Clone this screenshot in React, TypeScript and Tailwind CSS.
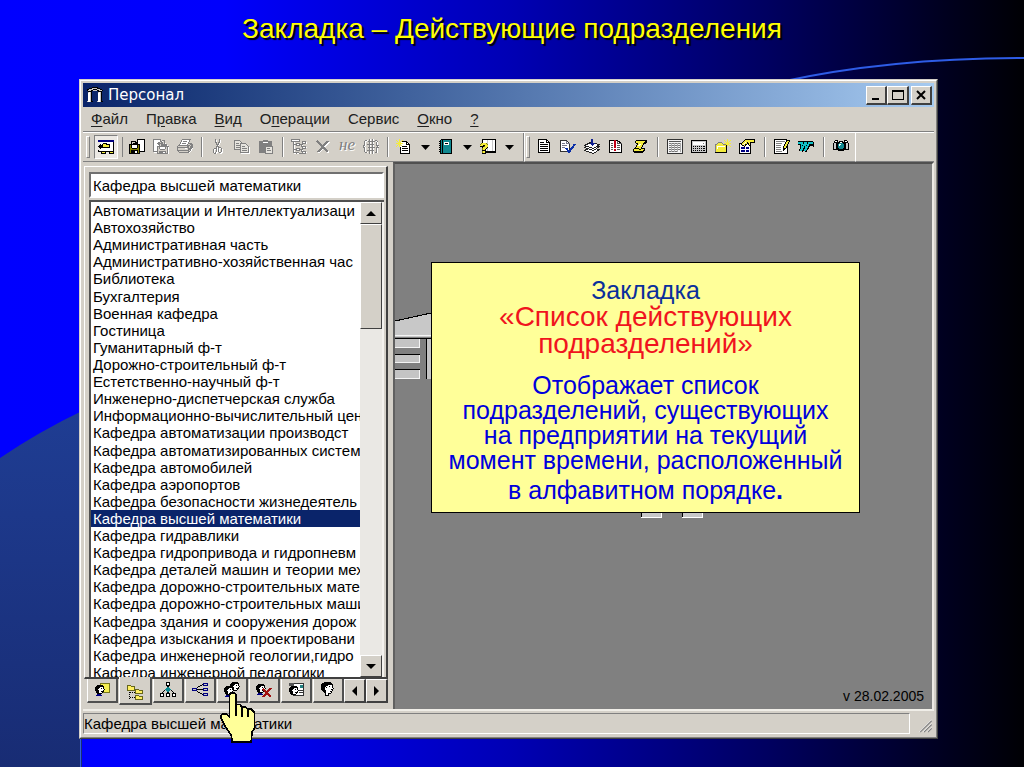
import React from "react";

type IconProps = { children: React.ReactNode; box?: string; className?: string };

function Icon({ children, box = "0 0 16 16", className = "size-4" }: IconProps) {
  return (
    <svg viewBox={box} className={`${className} block shrink-0`} shapeRendering="crispEdges" fill="none" aria-hidden="true">
      {children}
    </svg>
  );
}

const palette: Record<string, string> = {
  K: "#000000",
  W: "#ffffff",
  N: "#000080",
  Y: "#f4ec3c",
  O: "#808000",
  G: "#808080",
  L: "#c8c8c8",
  T: "#108890",
};

function Pixels({ rows, x = 0, y = 0 }: { rows: string[]; x?: number; y?: number }) {
  const cells: React.ReactNode[] = [];
  rows.forEach((row, r) => {
    let c = 0;
    while (c < row.length) {
      let end = c + 1;
      while (end < row.length && row[end] === row[c]) end += 1;
      if (palette[row[c]]) {
        cells.push(<rect key={`${r}-${c}`} x={x + c} y={y + r} width={end - c} height={1} fill={palette[row[c]]} />);
      }
      c = end;
    }
  });
  return <>{cells}</>;
}

const raised = "border border-t-white border-l-white border-r-[#404040] border-b-[#404040] bg-[#d4d0c8]";
const sunken = "border border-t-[#808080] border-l-[#808080] border-r-white border-b-white";

const smallHead = [
  "..KKKKKK..",
  ".KKKKKKKK.",
  "KKKKKWWWK.",
  "KKKKWWKWK.",
  "KKKWWWWWWK",
  "KKKKWWWWK.",
  ".KKKWWKKK.",
  ".KKKWWWK..",
  "..KKKKK...",
  "..NNNN....",
  ".NNNNNN...",
];

const icons: Record<string, React.ReactNode> = {
  app: (
    <Pixels
      rows={[
        ".....KKKKKK.....",
        "..KKKLLLLLKKK...",
        "KKLLLLKKKKLLLKK.",
        "KLLLKKLLLLKKLLLK",
        ".KKKK......KKKK.",
        ".LWLK......LWLK.",
        ".WWLK......WWLK.",
        ".WWLK......WWLK.",
        ".WWLK......WWLK.",
        ".WWLK......WWLK.",
        ".WWLK......WWLK.",
        ".WWLK......WWLK.",
        ".WWLK......WWLK.",
        ".WWLK......WWLK.",
        "LWWLKK....LWWLKK",
      ]}
    />
  ),
  view: (
    <Pixels
      rows={[
        "................",
        "NNNNNNNNNNNNNNNN",
        "NNNNNNNNNNNNNNNN",
        "..WWWWWWWWWWWWWK",
        "..WWWKKKKWWWWWWK",
        "..KWKYYYKKKKWWWK",
        ".KKKKYYYYYYKWWWK",
        "KKKKKYYYYYYKWWWK",
        ".KKKKKKKKKKKWWWK",
        "..KWWWWWWWWWWWWK",
        "..WWWWWWWWWWWWWK",
        "K.WWWWWWWWWWWWWK",
        "KKKKKKKKKKKKKKKK",
        "...KYYYK...KYYYK",
        "...KKKKK...KKKKK",
      ]}
    />
  ),
  save: (
    <Pixels
      rows={[
        "........KKKKKKKK",
        "........KWWWWWWK",
        "..KKKKK.KWWWWWWK",
        "..K...KKKWWWWWWK",
        "..K.KKKKKWWWWWWK",
        "KKKKKKKKKKKWWWWK",
        "KOKWWWWWKOKWWWWK",
        "KOKWWWWWKOKWWWWK",
        "KOKWWWWWKOKWWWWK",
        "KOOKKKKKOOKWWWWK",
        "KOOOOOOOOOKWWWWK",
        "KOKKKKKKKOKWWWWK",
        "KOKKKKWWKOKKKKKK",
        "KOKKKKWWKOK.....",
        "KKKKKKKKKKK.....",
      ]}
    />
  ),
  load: (
    <Pixels
      rows={[
        "GGGGGGGG........",
        "GWWWWWWG.GGG....",
        "GWWWWWWGGW.G....",
        "GWWWWGG.GG.G....",
        "GWWWGGGGGG.GW...",
        "GWWWWGG.GGGGGG..",
        "GWWWWWG.GGGGGGW.",
        "GWWWGGGGGGGGGGGG",
        "GWWWG.GWWWWWG.GW",
        "GWWWG.GWWWWWG.GW",
        "GWWWG..GGGGG..GW",
        "GWWWG.........GW",
        "GGGGG.GGGGGGG.GW",
        ".WWWG.GGGGWWG.GW",
        "....GGGGGGGGGGGW",
      ]}
    />
  ),
  print: (
    <Pixels
      rows={[
        ".....GGGGGGGGG..",
        "....GWWWWWWWG...",
        "....GWGGGGWWG...",
        "...GWWWWWWWG....",
        "...GWGGGGWWGGGG.",
        "..GWWWWWWWG..GGG",
        ".GGGGGGGGGGGG.GG",
        "G.........GG.GGG",
        "GGGGGGGGGGGG.GGG",
        "G.......WW.GGGGW",
        "G..........GGGW.",
        "GGGGGGGGGGGG.GW.",
        ".G.........GGW..",
        "..GGGGGGGGGGW...",
      ]}
    />
  ),
  cut: (
    <Pixels
      rows={[
        ".....G...G......",
        ".....GW..GW.....",
        ".....GW..GW.....",
        ".....GG.GGW.....",
        "......G.GW......",
        "......GGGW......",
        ".......GW.......",
        "......GGG.......",
        "......GWGGG.....",
        "....GGGWGWWG....",
        "...GWWGWGW.GW...",
        "...GW.GWGW.GW...",
        "...GW.GWGW.GW...",
        "...GWGWW.GGWW...",
        "....GGW...WW....",
      ]}
    />
  ),
  copy: (
    <>
      <path d="M.5 1.500h5l3 3v6h-8z" fill="#e6e4de" stroke="#808080" />
      <path d="M2 4.500h3M2 6.500h4M2 8.500h4" stroke="#808080" />
      <path d="M6.500 4.500h5l3 3v6h-8z" fill="#e6e4de" stroke="#808080" />
      <path d="M8 7.500h3M8 9.500h5M8 11.500h5" stroke="#808080" />
      <path d="M7 14.500h9M15.500 8v7" stroke="#fff" />
    </>
  ),
  paste: (
    <>
      <path d="M1 2h4V1h5v1h4v12H1z" fill="#808080" />
      <path d="M5 3h5v1H5z" fill="#fff" />
      <path d="M7.500 7.500h7v7h-7z" fill="#e6e4de" stroke="#808080" />
      <path d="M9 9.500h3M9 11.500h4" stroke="#808080" />
    </>
  ),
  tree: (
    <Pixels
      rows={[
        "GGGGGGGGG.......",
        "GWWWWWWWG.......",
        "GGGGGGGGG..GGGG.",
        "..GW.......GWWGW",
        "..GW.GGGG..GGGGW",
        "..GGGGWWGGGG....",
        "..GW.GGGG.GW....",
        "..GW......GGGGG.",
        "..GW.......GWWGW",
        "..GW.GGGG..GGGG.",
        "..GGGGWWGGGG....",
        "..GW.GGGG.GW....",
        "..GW......GGGGG.",
        "..GGGGGG...GWWGW",
        "...WWGWWGGGGGGG.",
      ]}
    />
  ),
  remove: (
    <>
      <path d="M3 3l11 11M14 3L4 14" stroke="#fff" strokeWidth="1.500" />
      <path d="M2 2l11 11M13 2L3 13" stroke="#808080" strokeWidth="2" />
    </>
  ),
  braces: (
    <Pixels
      rows={[
        "......GW.GW.....",
        "..GGW.GW.GW.GG..",
        ".GWW.GGGGGGG.WG.",
        ".GW...GW.GW..GW.",
        ".GW...GW.GW..GW.",
        ".GW.GGGGGGG..GW.",
        "GGW...GW.GW..GGG",
        "GW....GW.GW...GW",
        "GGW..GGGGGGG.GGG",
        ".GW...GW.GW..GW.",
        ".GW...GW.GW..GW.",
        ".GW.GGGGGGG..GW.",
        ".GW...GW.GW..GW.",
        "..GGW.GW.GW.GGW.",
        "......GW.GW.....",
      ]}
    />
  ),
  newDoc: (
    <Pixels
      rows={[
        "...Y............",
        "Y..Y..Y.........",
        ".Y.Y.YKKKKK.....",
        "..YYYWWWWWKK....",
        "YYYYYYYWWWKWK...",
        "..YYYWWWWWKKKK..",
        ".Y.Y.YWWWWWWWK..",
        "Y..YWWKKKKKWWK..",
        "....KWWWWWWWWK..",
        "....KWKKKKKKWK..",
        "....KWWWWWWWWK..",
        "....KWKKKKKKWK..",
        "....KWWWWWWWWK..",
        "....KWWWWWWWWK..",
        "....KKKKKKKKKK..",
      ]}
    />
  ),
  book: (
    <Pixels
      rows={[
        "...KKKKKKKKKKK..",
        "..KTKTTTTTTTTK..",
        ".KKTKTTTTTTTTK..",
        "..KTKTWWWWWTTK..",
        ".KKTKTWKKKWTTK..",
        "..KTKTWWWWWTTK..",
        ".KKTKTTTTTTTTK..",
        "..KTKTTTTTTTTK..",
        ".KKTKTTTTTTTTK..",
        "..KTKTTTTTTTTK..",
        ".KKTKTTTTTTTTK..",
        "..KTKTTTTTTTTK..",
        ".KKTKTTTTTTTTK..",
        "..KTKTTTTTTTTK..",
        "..KKKKKKKKKKKK..",
      ]}
    />
  ),
  help: (
    <Pixels
      rows={[
        "..KKKKKKKKKKKKKK",
        "..KWWWWLWWWWLWWK",
        "..KWWWWLWWWWLWWK",
        "..KWWWWLWWWWLWWK",
        ".OYYYYOLWWWWLWWK",
        "OYYYYYYOWWWWLWWK",
        "YYYKKYYYWWWWLWWK",
        "KKKKOYYYWWWWLWWK",
        "..KYYYYKWWWWLWWK",
        "..OYYYKLWWWWLWWK",
        "..OYYKWLWWWWLWWK",
        "..KKKKWLWWWWLWWK",
        "..OYYKKKKKKKKKKK",
        "..OYYKKKKKKKKKKK",
        "..KKKK..........",
      ]}
    />
  ),
  page: (
    <Pixels
      rows={[
        "..KKKKKKKKK.....",
        "..KWWWWWWWKK....",
        "..KWWWWWWWKWK...",
        "..KWKKKKWWKKKK..",
        "..KWWWWWWWWWWK..",
        "..KWKKKKKKKKWK..",
        "..KWWWWWWWWWWK..",
        "..KWKKKKKKKKWK..",
        "..KWWWWWWWWWWK..",
        "..KWKKKKKKKKWK..",
        "..KWWWWWWWWWWK..",
        "..KWKKKKKKKKWK..",
        "..KWWWWWWWWWWK..",
        "..KKKKKKKKKKKK..",
      ]}
    />
  ),
  check: (
    <>
      <path d="M.5 1.500h6l3 3v8h-9z" fill="#fff" stroke="#333" />
      <path d="M6.500 1.500v3h3M2 4.500h3M2 6.500h5M2 8.500h3" stroke="#778" />
      <path d="M6 9l3 4 6-8" stroke="#0a2fa8" strokeWidth="2" />
    </>
  ),
  stack: (
    <>
      <path d="M.5 11.500l6-3 9 2-6 4z" fill="#fff" stroke="#222" />
      <path d="M.5 8.500l6-3 9 2-6 4z" fill="#fff" stroke="#222" />
      <path d="M.5 6.500l6-3 9 2-6 4z" fill="#fff" stroke="#222" />
      <path d="M7 0h2v4h2L8 7 5 4h2z" fill="#102090" />
    </>
  ),
  alert: (
    <>
      <path d="M1.500 1.500h8l4 3v9h-12z" fill="#fff" stroke="#000" />
      <path d="M9.500 1.500v3h4M3 4.500h2M3 6.500h2M3 8.500h2M3 10.500h2M9 6.500h3M9 8.500h3M9 10.500h3" stroke="#555" />
      <path d="M6 1h2v8H6zM6 10h2v2H6z" fill="#c00018" />
    </>
  ),
  scroll: (
    <Pixels
      rows={[
        "................",
        "....KKKKKKKKKKK.",
        "...KYYYYYYYYYKK.",
        "...KYYYYYYYYKKK.",
        "....KKYYYYYKKK..",
        ".....KYWWYYK....",
        "....KYWWYYK.....",
        "....KYYYYYK.....",
        "...KYYYYYK......",
        "..KKKKKYYKKKK...",
        ".KYYYYYKKYYYK...",
        ".KYYYYYYYYYKK...",
        ".KKKKKKKKKKK....",
        "..KKKKKKKKK.....",
      ]}
    />
  ),
  table: (
    <>
      <path d="M.5.500h15v14H.500z" fill="#f4f4f4" stroke="#333" />
      <path d="M2 2.500h12" stroke="#555" />
      <path d="M2 4.500h12M2 6.500h12M2 8.500h12M2 10.500h12M2 12.500h8" stroke="#777" />
      <path d="M4.500 4v9M7.500 4v9M10.500 4v9M13.500 4v9" stroke="#aaa" />
    </>
  ),
  calc: (
    <Pixels
      rows={[
        "................",
        "KKKKKKKKKKKKKKKK",
        "KLLLLLLLLLLLLLLK",
        "KLWWWWWWWWWWWWLK",
        "KLWWWWWWWWWWGWLK",
        "KLWWWWWWWWWWWWLK",
        "KLLLLLLLLLLLLLLK",
        "KLKLKLKLKLKLKKLK",
        "KLLLLLLLLLLLLLLK",
        "KLKLKLKLKLKLKKLK",
        "KLLLLLLLLLLLLLLK",
        "KLKLKLKLKLKLKKLK",
        "KLLLLLLLLLLLLLLK",
        "KKKKKKKKKKKKKKKK",
      ]}
    />
  ),
  folderNew: (
    <Pixels
      rows={[
        "............Y...",
        ".........Y..Y..Y",
        "..........Y.Y.Y.",
        "...GGGG....YYY..",
        "..GYYYYG.YYYYYYY",
        "GGYYYYYYGGGYYY..",
        "GYYYYYYYYYYKY.Y.",
        "GYWWWWWWWWYK...Y",
        "GYWYYYYYYYYK....",
        "GYWYYYYYYYYK....",
        "GYYYYYYYYYYK....",
        "GYYYYYYYYYYK....",
        "GYYYYYYYYYYK....",
        "KKKKKKKKKKKK....",
      ]}
    />
  ),
  props: (
    <Pixels
      rows={[
        "......KKKKKKKKKK",
        ".....KYYYYYYYYYK",
        "....KYYYYYYYYYYK",
        "...KYYWYKYYKKKKK",
        "KKKYYWYYKKYK....",
        "KWKYWYKKWKYK....",
        "KWWKKYKWWWKK....",
        "KWWWWKWWWWWK....",
        "KWNNNNWNNNWK....",
        "KWNNNNWNNNWK....",
        "KWWWWWWWWWWK....",
        "KWNNNNWNNNWK....",
        "KWNNNNWNNNWK....",
        "KWWWWWWWWWWK....",
        "KKKKKKKKKKKK....",
      ]}
    />
  ),
  edit: (
    <Pixels
      rows={[
        "KKKKKKKKKKKKK...",
        "KWWWWWWWWWWWKKKK",
        "KWGGGGGGGGGWKYYK",
        "KWWWWWWWWWWKYYK.",
        "KWGGGGGGWWWKYYK.",
        "KWWWWWWWWWKYYK..",
        "KWGGGGGWWWKYYK..",
        "KWWWWWWWWKYYKK..",
        "KWGGGGGWWKYYKK..",
        "KWWWWWWWWKKKWK..",
        "KWGGGGGWWKKWWK..",
        "KWWWWWWWWKWWWK..",
        "KWGGGGGGWWWWWK..",
        "KWWWWWWWWWWWWK..",
        "KKKKKKKKKKKKKK..",
      ]}
    />
  ),
  word: (
    <>
      <path d="M0 4h4l-1 8 4-8h1l-1 8 4-6-1-2h4l1 2-1 1" stroke="#000" strokeWidth="3.500" />
      <path d="M0 4h4l-1 8 4-8h1l-1 8 4-8h4" stroke="#10c0c8" strokeWidth="1.500" />
    </>
  ),
  camera: (
    <Pixels
      rows={[
        "................",
        "..KKK......KKK..",
        ".KWWK.KKKK.KWWK.",
        ".KKKKKKWWKKKKKK.",
        "KLLKKKTTTTKKKLLK",
        "KLLKKTWWTTTKKLLK",
        "KLLKKTWTTTTKKLLK",
        "KLLKKTTTTTTKKLLK",
        "KLLKKTTTTTTKKLLK",
        "KLLKKKTTTTKKKLLK",
        "KKKKKKKKKKKKKKKK",
        ".....KKKKKK.....",
      ]}
    />
  ),
  faceFolder: (
    <>
      <path d="M6.500 1.500h9v9h-9z" fill="#f4ee50" stroke="#77771a" />
      <Pixels rows={smallHead} x={1} y={3} />
    </>
  ),
  folders: (
    <>
      <path d="M2.500 6v9M3 8.500h5M3 13.500h5" stroke="#000" strokeDasharray="1 1" />
      <path d="M.5 1.500h3l1 1h3v4h-7zM8.500 5.500h3l1 1h3v3h-7zM8.500 11.500h3l1 1h3v3h-7z" fill="#ffee60" stroke="#66661a" />
    </>
  ),
  org: (
    <Pixels
      rows={[
        "......KKKK......",
        "......KWWK......",
        "......KWWK......",
        "......KKKK......",
        ".......KK.......",
        ".......TT.......",
        "......TTTT......",
        ".....TTTTTT.....",
        "....K.TTTT.K....",
        "...K...TT...K...",
        "..K....KK....K..",
        "KKKK..KKKK..KKKK",
        "KWWK..KWWK..KWWK",
        "KWWK..KWWK..KWWK",
        "KKKK..KKKK..KKKK",
      ]}
    />
  ),
  branch: (
    <Pixels
      rows={[
        "................",
        "...........NNNNN",
        "..........KNLLLN",
        "........KK.NNNNN",
        "......KK........",
        ".....K..........",
        "NNNNN......NNNNN",
        "NLLLNKKKKKKNLLLN",
        "NNNNN......NNNNN",
        ".....K..........",
        "......KK........",
        "........KK.NNNNN",
        "..........KNLLLN",
        "...........NNNNN",
      ]}
    />
  ),
  people: (
    <>
      <Pixels rows={smallHead.slice(0, 9)} x={6} y={0} />
      <Pixels rows={smallHead} x={0} y={4} />
    </>
  ),
  faceDel: (
    <>
      <Pixels rows={smallHead} x={0} y={2} />
      <path d="M7 7l8 8M15 6l-8 9" stroke="#a01010" strokeWidth="2" />
    </>
  ),
  faceDoc: (
    <>
      <path d="M5.500 1.500h10v12h-10z" fill="#fff" stroke="#333" />
      <path d="M12 3h3v3h-3z" fill="#208080" />
      <path d="M11 8.500h4M11 10.500h4" stroke="#333" />
      <path d="M1 1h5v3H1z" fill="#555" />
      <Pixels rows={smallHead.slice(0, 9)} x={1} y={4} />
    </>
  ),
  faceOnly: (
    <Pixels
      rows={[
        "....KKKKKKK.....",
        "..KKKKKKKKKK....",
        ".KKKKKKKKKKKK...",
        ".KKKKKKKWWWWK...",
        ".KKKKKWWWKWWK...",
        ".KKKKWKWWWWWK...",
        ".KKKKWWWWWWWWK..",
        ".KKKKWWWWWWKK...",
        "..KKKKWWWWWWK...",
        "...KKKWWWWKK....",
        "....KKWWWWWK....",
        ".....KWWKKK.....",
        ".....KWWK.......",
        ".....KKKK.......",
      ]}
    />
  ),
};

function ToolButton({ name, label }: { name: string; label: string }) {
  return (
    <button type="button" aria-label={label} className="flex h-6 w-6 items-center justify-center">
      <Icon>{icons[name]}</Icon>
    </button>
  );
}

function Caret({ label }: { label: string }) {
  return (
    <button type="button" aria-label={label} className="flex h-6 w-[18px] items-center justify-center">
      <svg viewBox="0 0 9 5" className="h-[5px] w-[9px]" aria-hidden="true">
        <path d="M0 0h9L4.500 5z" fill="#000" />
      </svg>
    </button>
  );
}

function Sep({ wide = false }: { wide?: boolean }) {
  return (
    <span className={wide ? "flex w-[11px] justify-center" : "flex w-[9px] justify-center"}>
      <span className="h-5 w-[2px] border-l border-r border-l-[#808080] border-r-white" />
    </span>
  );
}

function Grip() {
  return <span className="h-[22px] w-1 border border-t-white border-l-white border-r-[#808080] border-b-[#808080]" />;
}

const menus = [
  ["", "Ф", "айл"],
  ["П", "р", "авка"],
  ["", "В", "ид"],
  ["О", "п", "ерации"],
  ["Сервис", "", ""],
  ["", "О", "кно"],
  ["", "?", ""],
];

const departments = [
  "Автоматизации и Интеллектуализаци",
  "Автохозяйство",
  "Административная часть",
  "Административно-хозяйственная час",
  "Библиотека",
  "Бухгалтерия",
  "Военная кафедра",
  "Гостиница",
  "Гуманитарный ф-т",
  "Дорожно-строительный ф-т",
  "Естетственно-научный ф-т",
  "Инженерно-диспетчерская служба",
  "Информационно-вычислительный цен",
  "Кафедра автоматизации производст",
  "Кафедра автоматизированных систем",
  "Кафедра автомобилей",
  "Кафедра аэропортов",
  "Кафедра безопасности жизнедеятель",
  "Кафедра высшей математики",
  "Кафедра гидравлики",
  "Кафедра гидропривода и гидропневм",
  "Кафедра деталей машин и теории мех",
  "Кафедра дорожно-строительных мате",
  "Кафедра дорожно-строительных маши",
  "Кафедра здания и сооружения дорож",
  "Кафедра изыскания и проектировани",
  "Кафедра инженерной геологии,гидро",
  "Кафедра инженерной педагогики",
];

const tabs = [
  ["faceFolder", "Сотрудники"],
  ["folders", "Действующие подразделения"],
  ["org", "Структура"],
  ["branch", "Ветви"],
  ["people", "Группы"],
  ["faceDel", "Уволенные"],
  ["faceDoc", "Документы"],
  ["faceOnly", "Личности"],
];

function Arrow({ d, box, className }: { d: string; box: string; className: string }) {
  return (
    <svg viewBox={box} className={className} aria-hidden="true">
      <path d={d} fill="#000" />
    </svg>
  );
}

function Backdrop() {
  return (
    <svg viewBox="0 0 1024 767" preserveAspectRatio="none" className="absolute inset-0 -z-10 h-full w-full" aria-hidden="true">
      <defs>
        <linearGradient id="sky" x1="0" y1="0" x2="1" y2="0">
          <stop offset="0" stopColor="#0000ff" />
          <stop offset="0.22" stopColor="#0000fc" />
          <stop offset="0.5" stopColor="#0000b4" />
          <stop offset="0.75" stopColor="#000060" />
          <stop offset="0.92" stopColor="#000020" />
          <stop offset="1" stopColor="#000004" />
        </linearGradient>
        <linearGradient id="planet" x1="0" y1="0" x2="0" y2="1">
          <stop offset="0" stopColor="#1f3d93" />
          <stop offset="1" stopColor="#182c74" />
        </linearGradient>
      </defs>
      <path d="M0 0h1024v767H0z" fill="url(#sky)" />
      <path d="M0 458Q40 431 82 411V767H0z" fill="url(#planet)" />
      <path d="M80.500 737V767" stroke="#2f5fe0" />
      <path d="M780 82Q890 58 1024 58" stroke="#2e5ce6" strokeWidth="2" fill="none" />
    </svg>
  );
}

function SidePanel() {
  return (
    <aside className="mt-1 flex w-[305px] shrink-0 flex-col pl-px">
      <div className="flex flex-col gap-[2px] border-t border-l border-r-2 border-b-2 border-t-white border-l-white border-r-[#404040] border-b-[#404040] pt-[5px] pr-[2px] pl-1">
        <input
          aria-label="Подразделение"
          defaultValue="Кафедра высшей математики"
          className="h-[26px] w-full border-2 border-t-[#707070] border-l-[#707070] border-r-white border-b-white bg-white px-[2px] text-[15px] outline-none"
        />
        <div className="flex h-[477px] border-t-2 border-l-2 border-t-[#505050] border-l-[#505050] bg-white">
          <div className="min-w-0 flex-1 overflow-hidden">
            <ul role="listbox" aria-label="Действующие подразделения" className="grid h-[479px] auto-rows-fr text-[15px] leading-[17px]">
              {departments.map((d) => (
                <li
                  key={d}
                  role="option"
                  aria-selected={d === "Кафедра высшей математики"}
                  className="overflow-hidden pl-[2px] whitespace-nowrap aria-selected:bg-[#0a246a] aria-selected:text-white"
                >
                  {d}
                </li>
              ))}
            </ul>
          </div>
          <div className="flex w-[22px] flex-col bg-[#eae8e4]">
            <button type="button" aria-label="Вверх" className={`${raised} flex h-[22px] items-center justify-center`}>
              <Arrow box="0 0 10 5" d="M5 0l5 5H0z" className="h-[5px] w-[10px]" />
            </button>
            <div className={`${raised} h-[105px]`} />
            <div className="flex-1" />
            <button type="button" aria-label="Вниз" className={`${raised} flex h-[22px] items-center justify-center`}>
              <Arrow box="0 0 10 5" d="M0 0h10L5 5z" className="h-[5px] w-[10px]" />
            </button>
          </div>
          <div className="w-[2px] bg-[#f4f2ee]" />
        </div>
      </div>
      <div className="flex items-start pl-[3px]">
        <div role="tablist" className="flex flex-1 items-start gap-px">
          {tabs.map(([name, label], i) => (
            <button
              key={name}
              type="button"
              role="tab"
              aria-label={label}
              aria-selected={i === 1}
              className="flex h-6 w-[31px] items-center justify-center border-r-2 border-b-2 border-l border-l-white border-r-[#505050] border-b-[#505050] bg-[#d4d0c8] aria-selected:-mt-[2px] aria-selected:h-7 aria-selected:w-[33px] aria-selected:pt-1"
            >
              <Icon>{icons[name]}</Icon>
            </button>
          ))}
        </div>
        <button type="button" aria-label="Назад" className={`${raised} flex h-6 w-[22px] items-center justify-center border-r-2 border-b-2`}>
          <Arrow box="0 0 5 10" d="M5 0v10L0 5z" className="h-[10px] w-[5px]" />
        </button>
        <button type="button" aria-label="Вперёд" className={`${raised} flex h-6 w-[22px] items-center justify-center border-r-2 border-b-2`}>
          <Arrow box="0 0 5 10" d="M0 0v10l5-5z" className="h-[10px] w-[5px]" />
        </button>
      </div>
    </aside>
  );
}

function Canvas() {
  return (
    <section className="relative ml-[5px] flex flex-1 items-end justify-end border-t-2 border-l-2 border-r-2 border-t-[#505050] border-l-[#606060] border-r-[#ece9e4] bg-[#808080] pr-2 pb-[5px]">
      <svg viewBox="0 0 320 360" className="absolute top-0 left-0 h-[360px] w-[320px]" shapeRendering="crispEdges" aria-hidden="true">
        <path d="M0 157L36 149V173H0z" fill="#c8c8c8" />
        <path d="M0 157L36 149" stroke="#000" />
        <path d="M0 171.500h36" stroke="#f4f4f4" />
        <path d="M0 174h25v10H0zM0 190h25v9H0zM0 205h25v10H0zM31 174h5v41h-5z" fill="#c4c4c4" />
        <path d="M0 174.500h36M0 190.500h25M0 205.500h25M31.500 174v41" stroke="#000" />
        <path d="M0 183.500h25M0 198.500h25M0 214.500h25M24.500 175v8M24.500 191v8M24.500 206v8" stroke="#f4f4f4" />
        <path d="M246 341h20v13h-20zM287 341h20v13h-20z" fill="#c8c8c8" />
        <path d="M246 353.500h20v-12M287 353.500h20v-12" stroke="#fff" fill="none" />
        <path d="M246.500 341v12M287.500 341v12" stroke="#000" />
      </svg>
      <div className="absolute top-[98px] left-9 h-[251px] w-[429px] border border-black bg-[#ffff99] pt-[15px] text-center text-[25px] leading-[25px] whitespace-nowrap text-[#0000dc]">
        <p className="text-[#0a2f9c]">Закладка</p>
        <p className="text-[28px] leading-[27px] text-[#f0141e]">
          «Список действующих
          <br />
          подразделений»
        </p>
        <p className="mt-4">
          Отображает список
          <br />
          подразделений, существующих
          <br />
          на предприятии на текущий
          <br />
          момент времени, расположенный
        </p>
        <p className="mt-[5px]">
          в алфавитном порядке<b>.</b>
        </p>
      </div>
      <span className="text-[14px] leading-4 text-black">v 28.02.2005</span>
    </section>
  );
}

export default function App() {
  return (
    <main className="relative isolate min-h-screen overflow-hidden pr-[86px] pl-[79px] font-['Liberation_Sans',Arial,sans-serif] text-black">
      <Backdrop />
      <h1 className="-mr-[7px] flex h-[79px] items-start justify-center pt-[13px] text-[28px] leading-8 whitespace-nowrap text-[#ffff00] [text-shadow:2px_2px_1px_#000]">
        Закладка – Действующие подразделения
      </h1>

      <div className="relative border border-t-[#d4d0c8] border-l-[#d4d0c8] border-r-[#404040] border-b-[#404040] bg-[#d4d0c8]">
        <div className="border border-t-white border-l-white border-r-[#808080] border-b-[#808080] p-[2px]">
          <header className="flex h-6 items-center bg-linear-to-r from-[#0a246a] to-[#a6caf0] pr-[2px] pl-1 text-white">
            <Icon>{icons.app}</Icon>
            <h2 className="ml-[5px] flex-1 font-['DejaVu_Sans',sans-serif] text-[15px] leading-5">Персонал</h2>
            <button type="button" aria-label="Свернуть" className={`${raised} flex h-[19px] w-[21px] items-center justify-center border-r-2 border-b-2`}>
              <svg viewBox="0 0 12 12" className="size-3" shapeRendering="crispEdges" aria-hidden="true">
                <path d="M2 9h7v2H2z" fill="#000" />
              </svg>
            </button>
            <button type="button" aria-label="Развернуть" className={`${raised} flex h-[19px] w-[22px] items-center justify-center border-r-2 border-b-2`}>
              <svg viewBox="0 0 12 12" className="size-3" shapeRendering="crispEdges" fill="none" aria-hidden="true">
                <path d="M.5 1.500h11v9H.5zM0 2.500h12" stroke="#000" />
              </svg>
            </button>
            <button type="button" aria-label="Закрыть" className={`${raised} ml-[2px] flex h-[19px] w-[21px] items-center justify-center border-r-2 border-b-2`}>
              <svg viewBox="0 0 12 12" className="size-3" aria-hidden="true">
                <path d="M2 2l8 8M10 2l-8 8" stroke="#000" strokeWidth="2" />
              </svg>
            </button>
          </header>

          <nav className="flex h-[25px] items-center gap-[18px] border-b border-b-[#808080] pl-2 text-[15px] text-[#202020]">
            {menus.map(([a, b, c]) => (
              <button type="button" key={a + b + c}>
                {a}
                <span className="underline underline-offset-2">{b}</span>
                {c}
              </button>
            ))}
          </nav>

          <div role="toolbar" aria-label="Инструменты" className="flex h-[30px] border-t border-t-white">
            <div className="flex items-center border-r border-b border-r-[#808080] border-b-[#808080] pr-[5px] pl-[3px]">
              <Grip />
              <button type="button" aria-label="Обзор" aria-pressed="true" className={`${sunken} mx-1 flex h-6 w-6 items-center justify-center bg-[#ece9e4]`}>
                <Icon>{icons.view}</Icon>
              </button>
              <span className="mr-[2px] h-5 w-px bg-[#808080]" />
              <ToolButton name="save" label="Сохранить" />
              <ToolButton name="load" label="Загрузить" />
              <ToolButton name="print" label="Печать" />
              <Sep />
              <ToolButton name="cut" label="Вырезать" />
              <ToolButton name="copy" label="Копировать" />
              <ToolButton name="paste" label="Вставить" />
              <Sep />
              <ToolButton name="tree" label="Дерево" />
              <ToolButton name="remove" label="Удалить" />
              <button type="button" className="h-6 w-6 pb-1 font-['Liberation_Serif',serif] text-[17px] leading-5 text-[#808080] italic [text-shadow:1px_1px_0_#fff]">
                не
              </button>
              <ToolButton name="braces" label="Скобки" />
              <Sep />
              <ToolButton name="newDoc" label="Новый документ" />
              <Caret label="Варианты документа" />
              <ToolButton name="book" label="Справочник" />
              <Caret label="Варианты справочника" />
              <ToolButton name="help" label="Запрос" />
              <Caret label="Варианты запроса" />
            </div>
            <div className="flex items-center border-r border-b border-l border-l-white border-r-white border-b-[#808080] pr-[2px] pl-px">
              <Grip />
              <span className="w-[2px]" />
              <ToolButton name="page" label="Приказ" />
              <ToolButton name="check" label="Проверить" />
              <ToolButton name="stack" label="Архив" />
              <ToolButton name="alert" label="Важное" />
              <ToolButton name="scroll" label="Журнал" />
              <Sep wide />
              <ToolButton name="table" label="Таблица" />
              <ToolButton name="calc" label="Калькулятор" />
              <ToolButton name="folderNew" label="Новая папка" />
              <ToolButton name="props" label="Свойства" />
              <Sep wide />
              <ToolButton name="edit" label="Изменить" />
              <ToolButton name="word" label="Word" />
              <Sep wide />
              <ToolButton name="camera" label="Снимок" />
            </div>
            <div className="flex-1 border-b border-b-[#808080]" />
          </div>

          <div className="flex h-[547px]">
            <SidePanel />
            <Canvas />
          </div>

          <footer className="flex h-[26px] items-stretch border-t-2 border-t-[#f0eee8] pt-[2px] pb-px">
            <div className={`${sunken} flex flex-1 items-center text-[15px] leading-5`}>Кафедра высшей математики</div>
            <svg viewBox="0 0 24 22" className="h-[21px] w-6" aria-hidden="true">
              <path d="M10 20L22 8M14 20l8-8M18 20l4-4" stroke="#808080" strokeWidth="1.500" />
              <path d="M9 20L22 7M13 20l9-9M17 20l5-5" stroke="#fff" strokeWidth=".7" />
            </svg>
          </footer>
        </div>

        <svg viewBox="-2 -2 108 154" className="absolute top-[612px] left-[140px] h-[51px] w-9" shapeRendering="crispEdges" aria-hidden="true">
          <path
            d="M26 6L32 1H42L46 6V36H58L64 44H76L82 50H92L102 60V106L94 120L92 148H34L32 130L20 112L8 92L1 78V68L8 64H16L26 74z"
            fill="#ffff99"
            stroke="#000"
            strokeWidth="5"
          />
          <path d="M46 36V70M64 44V72M82 50V74" stroke="#000" strokeWidth="4" />
        </svg>
      </div>
    </main>
  );
}
